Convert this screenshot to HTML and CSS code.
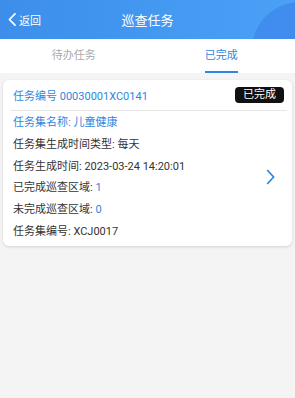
FILE: index.html
```
<!DOCTYPE html>
<html lang="zh">
<head>
<meta charset="utf-8">
<link rel="stylesheet" href="styles.css">
</head>
<body>
<header class="header">
  <div class="circle"></div>
  <a class="back">
    <svg class="back-icon" width="8" height="13" viewBox="0 0 8 13"><path d="M7 0.8 L1.4 6.5 L7 12.2" fill="none" stroke="#fff" stroke-width="1.7" stroke-linecap="round" stroke-linejoin="round"/></svg>
    <span>返回</span>
  </a>
  <h1 class="title">巡查任务</h1>
  <div></div>
</header>
<nav class="tabs">
  <div class="tab"><span>待办任务</span></div>
  <div class="tab active"><span>已完成</span></div>
</nav>
<section class="card">
  <div class="card-head">
    <span class="blue">任务编号 00030001XC0141</span>
    <span class="badge">已完成</span>
  </div>
  <div class="card-body">
    <div class="rows">
      <div class="row blue">任务集名称: 儿童健康</div>
      <div class="row">任务集生成时间类型: 每天</div>
      <div class="row">任务生成时间: 2023-03-24 14:20:01</div>
      <div class="row">已完成巡查区域: <span class="blue">1</span></div>
      <div class="row">未完成巡查区域: <span class="blue">0</span></div>
      <div class="row">任务集编号: XCJ0017</div>
    </div>
    <svg class="arrow" width="9" height="16" viewBox="0 0 9 16"><path d="M1.2 1 L7.6 8 L1.2 15" fill="none" stroke="#2f86e0" stroke-width="1.7"/></svg>
  </div>
</section>
</body>
</html>
```
FILE: styles.css
```
html, body {
  margin: 0;
  padding: 0;
}
body {
  background: #f4f4f4;
  font-family: Roboto, "Noto Sans CJK SC", sans-serif;
  color: #333;
  font-size: 11px;
}
.header {
  position: relative;
  overflow: hidden;
  height: 39px;
  background: linear-gradient(90deg, #3c8eea 0%, #4aa1f6 100%);
  display: grid;
  grid-template-columns: 1fr auto 1fr;
  align-items: center;
  color: #fff;
}
.circle {
  position: absolute;
  left: 252px;
  top: 2px;
  width: 96px;
  height: 96px;
  border-radius: 50%;
  background: #3f87ec;
  opacity: 0.75;
}
.back {
  position: relative;
  display: flex;
  align-items: center;
  padding-left: 8px;
  gap: 3px;
  font-size: 11px;
}
.title {
  position: relative;
  margin: 0;
  font-size: 13px;
  font-weight: normal;
}
.tabs {
  display: flex;
  background: #fff;
  height: 34px;
}
.tab {
  flex: 1;
  display: flex;
  justify-content: center;
  align-items: flex-end;
  font-size: 11px;
  color: #aaa;
}
.tab span {
  padding-bottom: 6px;
  border-bottom: 2px solid transparent;
  line-height: 18px;
}
.tab.active {
  color: #2f86e0;
}
.tab.active span {
  border-bottom-color: #2f86e0;
}
.card {
  margin: 7px 3px;
  background: #fff;
  border-radius: 6px;
  box-shadow: 0 1px 3px rgba(0, 0, 0, 0.14);
  padding: 0 5px 3px 7px;
}
.card-head {
  height: 30px;
  display: flex;
  justify-content: space-between;
  align-items: center;
  border-bottom: 1px solid #e6e6e6;
  padding-left: 3px;
  padding-right: 3px;
}
.badge {
  background: #111;
  color: #fff;
  border-radius: 4px;
  padding: 0 8px;
  font-size: 11px;
  line-height: 16px;
}
.card-body {
  display: flex;
  align-items: center;
  justify-content: space-between;
  padding-top: 1px;
  padding-left: 3px;
  padding-right: 12px;
}
.row {
  line-height: 21.8px;
}
.blue {
  color: #2f86e0;
}
```
